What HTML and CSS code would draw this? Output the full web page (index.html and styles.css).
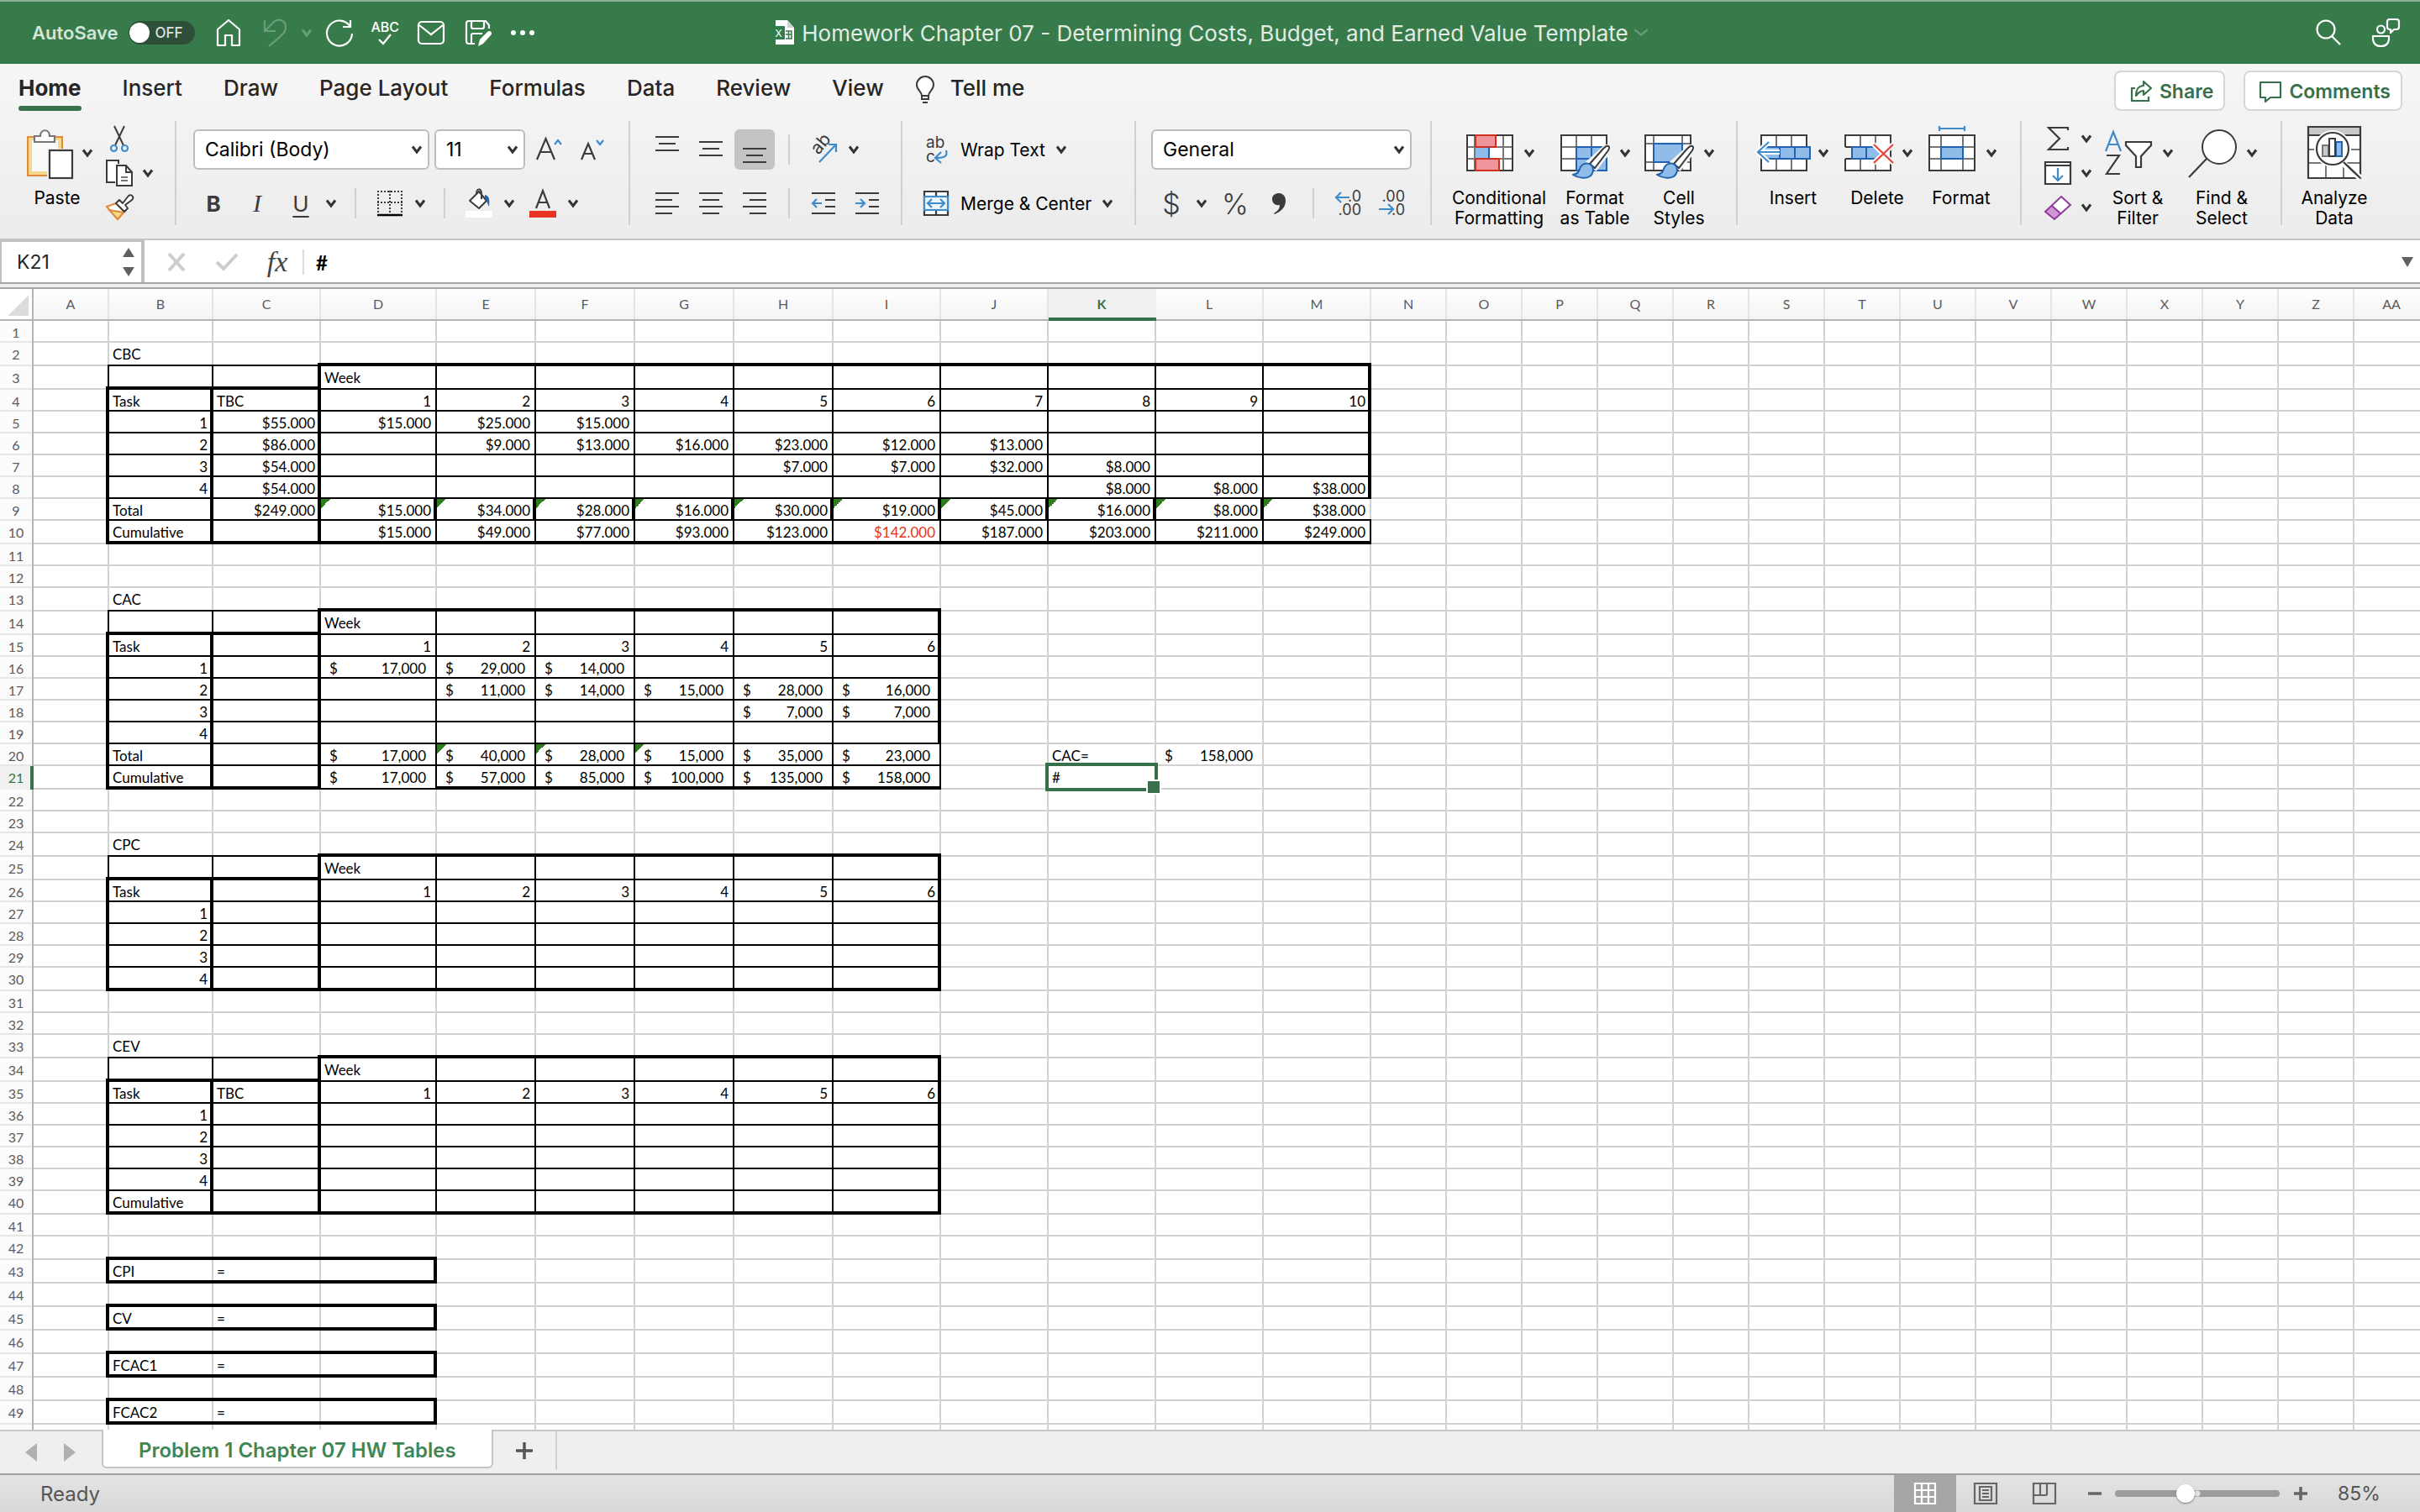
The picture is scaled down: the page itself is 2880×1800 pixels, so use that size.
FILE: index.html
```html
<!DOCTYPE html>
<html lang="en">
<head>
<meta charset="utf-8">
<title>Homework Chapter 07 - Determining Costs, Budget, and Earned Value Template</title>
<link rel="stylesheet" href="styles.css">
</head>
<body>
<svg class="defs" width="0" height="0" aria-hidden="true">
  <defs>
    <symbol id="chev" viewBox="0 0 14 14"><path d="M2 3.500 7 10l5-6.500" fill="none" stroke="currentColor" stroke-width="3"/></symbol>
    <symbol id="brush" viewBox="0 0 46 42"><path d="M42 2c3 0 3 2 2 4L28 27l-7-6z" fill="#fff" stroke="#f2f2f2" stroke-width="7"/><path d="M43 2c2 1 1 3 0 5L27 28l-6-5L37 5c2-2 4-4 6-3z" fill="#fff" stroke="#3b3b3b" stroke-width="2"/><path d="M1 36c6-1 7-4 8-7 2-6 8-8 13-5 4 3 4 10-1 14-5 3-14 2-20-2z" fill="#8fbce8" stroke="#2163b0" stroke-width="2"/></symbol>
  </defs>
</svg>

<header class="titlebar">
  <div class="quick">
    <label class="autosave" for="autosave">AutoSave</label>
    <span class="toggle"><input type="checkbox" id="autosave"><span class="toggle-text">OFF</span></span>
    <button class="qbtn home" aria-label="Home"><svg width="32" height="36" viewBox="0 0 32 36"><path d="M3 14 16 3l13 11v19h-9V21h-8v12H3z" fill="none" stroke="#fff" stroke-width="2.200" stroke-linejoin="round"/></svg></button>
    <button class="qbtn dim" aria-label="Undo"><svg width="32" height="36" viewBox="0 0 32 36"><path d="M3 3v13h13M3 16 14 5c6-5 14-1 14 6 0 5-2 7-6 11L8 34" fill="none" stroke="currentColor" stroke-width="2.200"/></svg></button>
    <button class="qchev dim" aria-label="Undo history"><svg width="14" height="14"><use href="#chev"/></svg></button>
    <button class="qbtn redo" aria-label="Repeat"><svg width="36" height="36" viewBox="0 0 36 36"><path d="M31 3v8h-9M31 11a15 15 0 1 0 2 8" fill="none" stroke="#fff" stroke-width="2.200"/></svg></button>
    <button class="qbtn abc" aria-label="Spelling"><span>ABC</span><svg width="18" height="14" viewBox="0 0 18 14"><path d="M2 7l5 5 9-11" fill="none" stroke="#fff" stroke-width="2.200"/></svg></button>
    <button class="qbtn" aria-label="Email"><svg width="36" height="32" viewBox="0 0 36 32"><rect x="3" y="3" width="30" height="26" rx="4" fill="none" stroke="#fff" stroke-width="2.200"/><path d="M4 7l14 11L32 7" fill="none" stroke="#fff" stroke-width="2.200"/></svg></button>
    <button class="qbtn" aria-label="Save"><svg width="36" height="36" viewBox="0 0 36 36"><path d="M14 31H7q-3 0-3-3V7q0-3 3-3h20l4 5v4M10 4v7q0 2 2 2h11q2 0 2-2V4M10 31V21q0-2 2-2h11" fill="none" stroke="#fff" stroke-width="2.200"/><path d="M18 34l2-8 9-9c3-3 7 1 4 4l-9 10z" fill="#fff"/></svg></button>
    <button class="qbtn" aria-label="More"><svg width="30" height="8" viewBox="0 0 30 8"><circle cx="4" cy="4" r="3" fill="#fff"/><circle cx="15" cy="4" r="3" fill="#fff"/><circle cx="26" cy="4" r="3" fill="#fff"/></svg></button>
  </div>
  <div class="doc">
    <svg width="30" height="32" viewBox="0 0 30 32"><path d="M5 1h14l8 9v20H5z" fill="#fff"/><path d="M19 1v9h8z" fill="#c9d6cd"/><path d="M17 14h7v9h-7M17 18h7M20.500 14v9" stroke="#37794a" stroke-width="1.500" fill="none"/><rect x="1" y="8" width="15" height="16" rx="1" fill="#2e7d4c"/><text x="8.500" y="20.500" font-size="12" fill="#fff" text-anchor="middle">X</text></svg>
    <h1>Homework Chapter 07 - Determining Costs, Budget, and Earned Value Template</h1>
    <svg class="dim" width="18" height="18" viewBox="0 0 14 14"><path d="M1 4l6 5 6-5" fill="none" stroke="currentColor" stroke-width="1.600"/></svg>
  </div>
  <div class="title-right">
    <button class="qbtn" aria-label="Search"><svg width="34" height="34" viewBox="0 0 34 34"><circle cx="14" cy="13" r="10.500" fill="none" stroke="#fff" stroke-width="2.200"/><path d="M21 21l10 10" stroke="#fff" stroke-width="2.200"/></svg></button>
    <button class="qbtn" aria-label="Collaborate"><svg width="38" height="36" viewBox="0 0 38 36"><path d="M22 2h10q3 0 3 3v6q0 3-3 3h-3l-4 4v-4h-1q-3 0-3-3V5q0-3 3-3M4 22h19v4q-1 8-9.500 8T4 26z" fill="none" stroke="#fff" stroke-width="2.200" stroke-linejoin="round"/><circle cx="13.500" cy="14" r="4.500" fill="none" stroke="#fff" stroke-width="2.200"/></svg></button>
  </div>
</header>

<section class="ribbon">
  <div class="tabrow">
    <nav class="tabs">
      <a href="#" class="tab active">Home</a>
      <a href="#" class="tab">Insert</a>
      <a href="#" class="tab">Draw</a>
      <a href="#" class="tab">Page Layout</a>
      <a href="#" class="tab">Formulas</a>
      <a href="#" class="tab">Data</a>
      <a href="#" class="tab">Review</a>
      <a href="#" class="tab">View</a>
      <a href="#" class="tab tell"><svg width="24" height="34" viewBox="0 0 24 34"><path d="M8 24c0-5-6-7-6-13a10 10 0 0 1 20 0c0 6-6 8-6 13z" fill="#fff" stroke="#3b3b3b" stroke-width="2"/><path d="M8 28h8M9 32h6M8 24v4h8v-4" stroke="#3b3b3b" stroke-width="2" fill="none"/></svg>Tell me</a>
    </nav>
    <div class="share-area">
      <button class="pill"><svg width="28" height="28" viewBox="0 0 28 28"><path d="M7 10H3v15h20v-5" fill="none" stroke="#37704a" stroke-width="2.200"/><path d="M17 2v5C11 7 8 12 8 19c3-4 5-6 9-6v5l9-8z" fill="none" stroke="#37704a" stroke-width="2.200" stroke-linejoin="round"/></svg>Share</button>
      <button class="pill"><svg width="28" height="28" viewBox="0 0 28 28"><path d="M2 3h24v18H14l-6 5v-5H2z" fill="none" stroke="#37704a" stroke-width="2.200" stroke-linejoin="round"/></svg>Comments</button>
    </div>
  </div>

  <div class="groups">
    <div class="group clipboard">
      <button class="big"><span class="big-top"><svg width="64" height="64" viewBox="0 0 64 64"><rect x="8" y="13" width="41" height="46" fill="#f5d88b" stroke="#e08a3c" stroke-width="2"/><rect x="13" y="17" width="31" height="37" fill="#fafafa"/><path d="M16 12h7c0-9 11-9 11 0h6v7H16z" fill="#fff" stroke="#777" stroke-width="2.200"/><rect x="31" y="27" width="33" height="37" fill="#f2f2f2"/><rect x="34" y="29" width="27" height="33" fill="#fff" stroke="#3b3b3b" stroke-width="2.200"/></svg><svg class="chev" width="14" height="14"><use href="#chev"/></svg></span><span class="cap">Paste</span></button>
      <div class="stack">
        <button class="mini" aria-label="Cut"><svg width="34" height="34" viewBox="0 0 34 34"><path d="M11 2l11 23M23 2 12 25" stroke="#3b3b3b" stroke-width="2" fill="none"/><circle cx="10.500" cy="28.500" r="3.500" fill="none" stroke="#3f8ccc" stroke-width="2.200"/><circle cx="23.500" cy="28.500" r="3.500" fill="none" stroke="#3f8ccc" stroke-width="2.200"/></svg></button>
        <button class="mini" aria-label="Copy"><svg width="34" height="34" viewBox="0 0 34 34"><path d="M12 28H2V2h14v4" fill="#fff" stroke="#3b3b3b" stroke-width="2"/><path d="M14 8h11l7 8v16H14z" fill="#fff" stroke="#3b3b3b" stroke-width="2"/><path d="M25 8v8h7" fill="none" stroke="#3b3b3b" stroke-width="2"/><path d="M19 22h8M19 26h8" stroke="#777" stroke-width="2"/></svg><svg class="chev" width="14" height="14"><use href="#chev"/></svg></button>
        <button class="mini" aria-label="Format painter"><svg width="34" height="34" viewBox="0 0 34 34"><path d="M2 16l11-4 10 10-8 9z" fill="#fff" stroke="#e08a3c" stroke-width="2"/><path d="M5 20l17 3-7 8z" fill="#f5d88b" stroke="#e08a3c" stroke-width="2"/><path d="M13 12l4-4 4 4 7-9q3-2 5 1 1 2-1 4l-8 6 3 4-4 4z" fill="#fff" stroke="#3b3b3b" stroke-width="2" stroke-linejoin="round"/></svg></button>
      </div>
    </div>

    <div class="group rows font">
      <div class="row fields">
        <span class="field face"><select aria-label="Font"><option>Calibri (Body)</option></select><svg width="14" height="14"><use href="#chev"/></svg></span>
        <span class="field size"><select aria-label="Font size"><option>11</option></select><svg width="14" height="14"><use href="#chev"/></svg></span>
        <button class="tb" aria-label="Grow font"><svg width="36" height="34" viewBox="0 0 36 34"><path d="M4 29 14.500 4 25 29M8 20h13" fill="none" stroke="#3b3b3b" stroke-width="2.200"/><path d="M25 11l4-5 4 5" fill="none" stroke="#3f8ccc" stroke-width="2.200"/></svg></button>
        <button class="tb" aria-label="Shrink font"><svg width="36" height="34" viewBox="0 0 36 34"><path d="M7 29 15 10l8 19M10 22h10" fill="none" stroke="#3b3b3b" stroke-width="2.200"/><path d="M25 6l4 5 4-5" fill="none" stroke="#3f8ccc" stroke-width="2.200"/></svg></button>
      </div>
      <div class="row">
        <button class="tb glyph bold">B</button><button class="tb glyph ital">I</button><button class="tb glyph under">U</button><button class="drop" aria-label="Underline styles"><svg width="14" height="14"><use href="#chev"/></svg></button>
        <i class="sep"></i>
        <button class="tb" aria-label="Borders"><svg width="32" height="32" viewBox="0 0 32 32"><path d="M1 2h30M1 15h30" stroke="#3b3b3b" stroke-width="2" stroke-dasharray="2 2"/><path d="M2 1v27M16 1v27M30 1v27" stroke="#3b3b3b" stroke-width="2" stroke-dasharray="2 2"/><path d="M1 30h30" stroke="#000" stroke-width="2.500"/></svg></button><button class="drop" aria-label="Border styles"><svg width="14" height="14"><use href="#chev"/></svg></button>
        <i class="sep"></i>
        <button class="tb" aria-label="Fill colour"><svg width="34" height="36" viewBox="0 0 34 36"><path d="M6 15 17 4l9 11-9 9z" fill="#fff" stroke="#3b3b3b" stroke-width="2" stroke-linejoin="round"/><path d="M14 7c0-7 6-8 6 0v6" fill="none" stroke="#3b3b3b" stroke-width="2"/><path d="M24 8c5 1 6 5 5 14-2-3-2-7-5-10z" fill="#2163b0"/><rect x="1" y="27" width="32" height="8" fill="#fff"/></svg></button><button class="drop" aria-label="Fill colours"><svg width="14" height="14"><use href="#chev"/></svg></button>
        <button class="tb fontcolor" aria-label="Font colour"><svg width="34" height="36" viewBox="0 0 34 36"><path d="M9 24 17 3l8 21M11 17h12" fill="none" stroke="#3b3b3b" stroke-width="2.200"/><rect x="1" y="27" width="32" height="8" fill="#e93323"/></svg></button><button class="drop" aria-label="Font colours"><svg width="14" height="14"><use href="#chev"/></svg></button>
      </div>
    </div>

    <div class="group rows align">
      <div class="row">
        <button class="tb" aria-label="Top align"><svg width="28" height="34" viewBox="0 0 28 34"><path d="M0 2h28M4 10h20M0 18h28" stroke="#3b3b3b" stroke-width="2.200"/></svg></button>
        <button class="tb" aria-label="Middle align"><svg width="28" height="34" viewBox="0 0 28 34"><path d="M0 8h28M4 16h20M0 24h28" stroke="#3b3b3b" stroke-width="2.200"/></svg></button>
        <button class="tb pressed" aria-label="Bottom align"><svg width="28" height="34" viewBox="0 0 28 34"><path d="M0 16h28M4 24h20M0 32h28" stroke="#3b3b3b" stroke-width="2.200"/></svg></button>
        <i class="sep"></i>
        <button class="tb" aria-label="Orientation"><svg width="34" height="32" viewBox="0 0 34 32"><text x="0" y="0" font-size="21" fill="#3b3b3b" transform="translate(11 23) rotate(-50)">ab</text><path d="M12 31 32 10M23 10h9v9" fill="none" stroke="#3f8ccc" stroke-width="2.200"/></svg></button><button class="drop" aria-label="Orientations"><svg width="14" height="14"><use href="#chev"/></svg></button>
      </div>
      <div class="row">
        <button class="tb" aria-label="Align left"><svg width="28" height="28" viewBox="0 0 28 28"><path d="M0 2h28M0 10h20M0 18h28M0 26h20" stroke="#3b3b3b" stroke-width="2.200"/></svg></button>
        <button class="tb" aria-label="Centre"><svg width="28" height="28" viewBox="0 0 28 28"><path d="M0 2h28M4 10h20M0 18h28M4 26h20" stroke="#3b3b3b" stroke-width="2.200"/></svg></button>
        <button class="tb" aria-label="Align right"><svg width="28" height="28" viewBox="0 0 28 28"><path d="M0 2h28M8 10h20M0 18h28M8 26h20" stroke="#3b3b3b" stroke-width="2.200"/></svg></button>
        <i class="sep"></i>
        <button class="tb" aria-label="Decrease indent"><svg width="28" height="28" viewBox="0 0 28 28"><path d="M0 2h28M16 10h12M16 18h12M0 26h28" stroke="#3b3b3b" stroke-width="2.200"/><path d="M12 14H1M6 9l-5 5 5 5" fill="none" stroke="#3f8ccc" stroke-width="2.200"/></svg></button>
        <button class="tb" aria-label="Increase indent"><svg width="28" height="28" viewBox="0 0 28 28"><path d="M0 2h28M16 10h12M16 18h12M0 26h28" stroke="#3b3b3b" stroke-width="2.200"/><path d="M0 14h11M6 9l5 5-5 5" fill="none" stroke="#3f8ccc" stroke-width="2.200"/></svg></button>
      </div>
    </div>

    <div class="group rows wrap">
      <div class="row"><button class="wide"><span class="tb"><svg width="28" height="34" viewBox="0 0 28 34"><text x="2" y="15" font-size="19" fill="#3b3b3b">ab</text><text x="2" y="32" font-size="19" fill="#3b3b3b">c</text><path d="M26 18c2 7-2 9-12 9M20 20l-7 7 7 6" fill="none" stroke="#3f8ccc" stroke-width="2.200"/></svg></span>Wrap Text<svg class="chev" width="14" height="14"><use href="#chev"/></svg></button></div>
      <div class="row"><button class="wide"><span class="tb"><svg width="32" height="32" viewBox="0 0 32 32"><path d="M2 2h28v28H2zM16 2v28" fill="#fff" stroke="#3b3b3b" stroke-width="2.200"/><rect x="2" y="8" width="28" height="16" fill="#eef5fc" stroke="#3f8ccc" stroke-width="2.200"/><path d="M6 16h20M11 11l-5 5 5 5M21 11l5 5-5 5" fill="none" stroke="#3f8ccc" stroke-width="2.200"/></svg></span>Merge &amp; Center<svg class="chev" width="14" height="14"><use href="#chev"/></svg></button></div>
    </div>

    <div class="group rows number">
      <div class="row fields"><span class="field format"><select aria-label="Number format"><option>General</option></select><svg width="14" height="14"><use href="#chev"/></svg></span></div>
      <div class="row">
        <button class="tb glyph thin">$</button><button class="drop" aria-label="Currencies"><svg width="14" height="14"><use href="#chev"/></svg></button>
        <button class="tb glyph thin">%</button><button class="tb" aria-label="Comma style"><svg width="20" height="28" viewBox="0 0 20 28"><path d="M4 26c5-3 7-6 7-10-5 1-9-2-9-7s4-7 8-7c5 0 8 4 8 9 0 8-6 13-13 16z" fill="#3b3b3b"/></svg></button>
        <i class="sep"></i>
        <button class="tb" aria-label="Increase decimals"><svg width="34" height="34" viewBox="0 0 34 34"><text x="33" y="15" font-size="18" fill="#3b3b3b" text-anchor="end">.0</text><text x="33" y="31" font-size="18" fill="#3b3b3b" text-anchor="end">.00</text><path d="M19 10H3M9 4l-6 6 6 6" fill="none" stroke="#3f8ccc" stroke-width="2.200"/></svg></button>
        <button class="tb" aria-label="Decrease decimals"><svg width="34" height="34" viewBox="0 0 34 34"><text x="33" y="15" font-size="18" fill="#3b3b3b" text-anchor="end">.00</text><text x="33" y="31" font-size="18" fill="#3b3b3b" text-anchor="end">.0</text><path d="M2 24h17M13 18l6 6-6 6" fill="none" stroke="#3f8ccc" stroke-width="2.200"/></svg></button>
      </div>
    </div>

    <div class="group styles">
      <button class="big broad"><span class="big-top"><svg width="64" height="64" viewBox="0 0 64 64"><rect x="5" y="11" width="54" height="42" fill="#fff"/><path d="M14 11v42M48 11v42M5 25h54M5 39h54" stroke="#777" stroke-width="2"/><rect x="5" y="11" width="54" height="42" fill="none" stroke="#3b3b3b" stroke-width="2"/><path d="M15 11h24v14H15zM15 39h28v14H15z" fill="#f0959b" stroke="#d0311f" stroke-width="2"/><path d="M15 26h16v12H15z" fill="#8fbce8"/><path d="M31 25v14" stroke="#2163b0" stroke-width="2"/></svg><svg class="chev" width="14" height="14"><use href="#chev"/></svg></span><span class="cap">Conditional<br>Formatting</span></button>
      <button class="big"><span class="big-top"><svg width="64" height="64" viewBox="0 0 64 64"><rect x="3" y="11" width="54" height="42" fill="#fff"/><path d="M21 11v42M39 11v42M3 25h54M3 39h54" stroke="#777" stroke-width="2"/><rect x="3" y="11" width="54" height="42" fill="none" stroke="#3b3b3b" stroke-width="2"/><path d="M21 25h36v28H21zM39 25v28M21 39h36" fill="#8fbce8" stroke="#2163b0" stroke-width="2"/><use href="#brush" x="16" y="22" width="46" height="42"/></svg><svg class="chev" width="14" height="14"><use href="#chev"/></svg></span><span class="cap">Format<br>as Table</span></button>
      <button class="big"><span class="big-top"><svg width="64" height="64" viewBox="0 0 64 64"><rect x="3" y="11" width="54" height="42" fill="#fff"/><path d="M13 11v42M47 11v42M3 21h54M3 43h54" stroke="#777" stroke-width="2"/><rect x="3" y="11" width="54" height="42" fill="none" stroke="#3b3b3b" stroke-width="2"/><rect x="13" y="21" width="34" height="22" fill="#8fbce8" stroke="#2163b0" stroke-width="2"/><use href="#brush" x="16" y="22" width="46" height="42"/></svg><svg class="chev" width="14" height="14"><use href="#chev"/></svg></span><span class="cap">Cell<br>Styles</span></button>
    </div>

    <div class="group cells">
      <button class="big"><span class="big-top"><svg width="64" height="64" viewBox="0 0 64 64"><rect x="5" y="11" width="54" height="42" fill="#fff"/><path d="M23 11v42M41 11v42" stroke="#777" stroke-width="2"/><rect x="5" y="11" width="54" height="42" fill="none" stroke="#3b3b3b" stroke-width="2"/><path d="M8 25h55v14H8zM27 25v14M45 25v14" fill="#8fbce8" stroke="#2163b0" stroke-width="2"/><path d="M27 31H3M14 19 1 31l13 12" fill="none" stroke="#fff" stroke-width="6"/><path d="M27 31H2M14 19 1 31l13 12" fill="none" stroke="#3f8ccc" stroke-width="2.200"/></svg><svg class="chev" width="14" height="14"><use href="#chev"/></svg></span><span class="cap">Insert</span></button>
      <button class="big"><span class="big-top"><svg width="64" height="64" viewBox="0 0 64 64"><path d="M5 11h54v42H5V39h8V25H5z" fill="#fff"/><path d="M23 11v42M41 11v42" stroke="#777" stroke-width="2"/><path d="M5 25V11h54v42H5V39M5 25h8M5 39h8" fill="none" stroke="#3b3b3b" stroke-width="2"/><path d="M13 25h28l8 7-8 7H13zM30 25v14" fill="#8fbce8" stroke="#2163b0" stroke-width="2"/><path d="M39 22l23 22M62 22 39 44" stroke="#fff" stroke-width="6"/><path d="M39 22l23 22M62 22 39 44" stroke="#e5483f" stroke-width="2.400"/></svg><svg class="chev" width="14" height="14"><use href="#chev"/></svg></span><span class="cap">Delete</span></button>
      <button class="big"><span class="big-top"><svg width="64" height="64" viewBox="0 0 64 64"><rect x="5" y="11" width="54" height="42" fill="#fff"/><path d="M19 11v42M45 11v42M5 25h54M5 39h54" stroke="#777" stroke-width="2"/><rect x="5" y="11" width="54" height="42" fill="none" stroke="#3b3b3b" stroke-width="2"/><rect x="19" y="25" width="26" height="14" fill="#8fbce8" stroke="#2163b0" stroke-width="2"/><path d="M17 0v6M47 0v6M17 3h30" stroke="#3f8ccc" stroke-width="2.200"/></svg><svg class="chev" width="14" height="14"><use href="#chev"/></svg></span><span class="cap">Format</span></button>
    </div>

    <div class="group editing">
      <div class="stack">
        <button class="mini" aria-label="AutoSum"><svg width="34" height="34" viewBox="0 0 34 34"><path d="M29 7V4H6l13 13L6 30h23v-3" fill="none" stroke="#3b3b3b" stroke-width="2.200"/></svg><svg class="chev" width="14" height="14"><use href="#chev"/></svg></button>
        <button class="mini" aria-label="Fill"><svg width="34" height="34" viewBox="0 0 34 34"><path d="M2 4h30v26H2zM2 8h30" fill="#fff" stroke="#3b3b3b" stroke-width="2.200"/><path d="M17 11v15M11 20l6 6 6-6" fill="none" stroke="#3f8ccc" stroke-width="2.200"/></svg><svg class="chev" width="14" height="14"><use href="#chev"/></svg></button>
        <button class="mini" aria-label="Clear"><svg width="34" height="34" viewBox="0 0 34 34"><path d="M21 4l11 10-19 17L2 22z" fill="#fff"/><path d="M10 15l10 9-7 7L2 22z" fill="#cf95d6"/><path d="M21 4l11 10-19 17L2 22zM10 15l10 9" fill="none" stroke="#8f3c9c" stroke-width="2"/></svg><svg class="chev" width="14" height="14"><use href="#chev"/></svg></button>
      </div>
      <button class="big"><span class="big-top"><svg width="64" height="64" viewBox="0 0 64 64"><path d="M5 30 14 7l9 23M8 22h12" fill="none" stroke="#3f8ccc" stroke-width="2.200"/><path d="M6 35h15L6 57h16" fill="none" stroke="#3b3b3b" stroke-width="2.200"/><path d="M29 19h30v4L47 36v13h-6V36L29 23z" fill="#fff" stroke="#3b3b3b" stroke-width="2.200"/></svg><svg class="chev" width="14" height="14"><use href="#chev"/></svg></span><span class="cap">Sort &amp;<br>Filter</span></button>
      <button class="big"><span class="big-top"><svg width="64" height="64" viewBox="0 0 64 64"><circle cx="40" cy="25" r="20" fill="#fff" stroke="#3b3b3b" stroke-width="2"/><path d="M25 39 4 61" stroke="#3b3b3b" stroke-width="2.200"/></svg><svg class="chev" width="14" height="14"><use href="#chev"/></svg></span><span class="cap">Find &amp;<br>Select</span></button>
    </div>

    <div class="group analyze">
      <button class="big"><span class="big-top"><svg width="64" height="64" viewBox="0 0 64 64"><path d="M1 1h62v61H1z" fill="#fff"/><path d="M1 1h62v10H1z" fill="#c9c9c9"/><path d="M1 28h62M1 44h62M22 44v18M43 44v18" stroke="#777" stroke-width="2"/><path d="M1 1h62v61H1zM1 11h62" fill="none" stroke="#3b3b3b" stroke-width="2.200"/><circle cx="30" cy="27" r="22" fill="#fff"/><path d="M41 43l22 19" stroke="#fff" stroke-width="7"/><circle cx="30" cy="27" r="19" fill="#fff" stroke="#3b3b3b" stroke-width="2.200"/><path d="M43 43l20 19" stroke="#3b3b3b" stroke-width="2.400"/><path d="M18 23h7v13h-7z" fill="#c9c9c9" stroke="#777" stroke-width="2"/><path d="M34 19h7v17h-7z" fill="#8fbce8" stroke="#2163b0" stroke-width="2"/><path d="M26 15h7v21h-7z" fill="#fff" stroke="#3b3b3b" stroke-width="2"/></svg></span><span class="cap">Analyze<br>Data</span></button>
    </div>
  </div>
</section>

<section class="formula">
  <div class="namebox"><input class="name" aria-label="Name box" value="K21"><svg width="14" height="34" viewBox="0 0 14 34"><path d="M0 11 7 0l7 11zM0 23l7 11 7-11z" fill="#606060"/></svg></div>
  <button class="fbtn" aria-label="Cancel"><svg width="22" height="22" viewBox="0 0 22 22"><path d="M2 1l18 20M20 1 2 21" stroke="#cdcdcd" stroke-width="4"/></svg></button>
  <button class="fbtn" aria-label="Enter"><svg width="28" height="22" viewBox="0 0 28 22"><path d="M2 11l8 8L26 2" fill="none" stroke="#cdcdcd" stroke-width="4"/></svg></button>
  <button class="fbtn fx" aria-label="Insert function"><em>fx</em></button>
  <input class="entry" aria-label="Formula" value="#">
  <button class="expand" aria-label="Expand formula bar"><svg width="14" height="12" viewBox="0 0 14 12"><path d="M0 0h14L7 12z" fill="#606060"/></svg></button>
</section>

<main class="sheet"><table class="grid" id="grid"></table></main>

<footer class="sheetbar">
  <button class="arrow" aria-label="Previous sheet"><svg width="14" height="22" viewBox="0 0 14 22"><path d="M14 0v22L0 11z" fill="#b0b0b0"/></svg></button>
  <button class="arrow" aria-label="Next sheet"><svg width="14" height="22" viewBox="0 0 14 22"><path d="M0 0v22l14-11z" fill="#b0b0b0"/></svg></button>
  <button class="sheet-tab">Problem 1 Chapter 07 HW Tables</button>
  <button class="add" aria-label="New sheet"><svg width="20" height="20" viewBox="0 0 20 20"><path d="M10 0v20M0 10h20" stroke="#555" stroke-width="3.500"/></svg></button>
</footer>

<footer class="status">
  <span class="ready">Ready</span>
  <button class="view on" aria-label="Normal view"><svg width="26" height="26" viewBox="0 0 26 26"><path d="M1 1h24v24H1zM1 9h24M1 17h24M9 1v24M17 1v24" fill="none" stroke="#fff" stroke-width="2.200"/></svg></button>
  <button class="view" aria-label="Page layout view"><svg width="28" height="26" viewBox="0 0 28 26"><path d="M1 1h26v24H1zM7 5h14v16H7zM10 9h8M10 13h8M10 17h8" fill="none" stroke="#666" stroke-width="2.200"/></svg></button>
  <button class="view" aria-label="Page break view"><svg width="28" height="26" viewBox="0 0 28 26"><path d="M1 1h26v24H1zM9 1v14M17 1v14M1 15h16" fill="none" stroke="#666" stroke-width="2.200"/></svg></button>
  <button class="zoom-step" aria-label="Zoom out"><svg width="16" height="16" viewBox="0 0 16 16"><path d="M0 8h16" stroke="#666" stroke-width="3.500"/></svg></button>
  <input class="zoom" type="range" min="0" max="100" value="42" aria-label="Zoom">
  <button class="zoom-step" aria-label="Zoom in"><svg width="16" height="16" viewBox="0 0 16 16"><path d="M0 8h16M8 0v16" stroke="#666" stroke-width="3.500"/></svg></button>
  <span class="percent">85%</span>
</footer>
<script src="sheet.js"></script>
</body>
</html>
```
FILE: styles.css
```css
* { box-sizing: border-box; }

body {
  margin: 0;
  height: 100vh;
  display: flex;
  flex-direction: column;
  overflow: hidden;
  font-family: Inter, "Liberation Sans", sans-serif;
  font-size: 22px;
  color: #000;
  background: #fff;
}

button, input, select { font: inherit; color: inherit; border: 0; background: none; padding: 0; margin: 0; }
svg { display: block; flex: none; overflow: visible; }
.defs { position: absolute; }

/* Title bar */
.titlebar {
  display: grid;
  grid-template-columns: 1fr auto 1fr;
  align-items: center;
  height: 76px;
  background: #387b4a;
  border-top: 2px solid #8bb196;
  color: #fff;
}
.quick { display: flex; align-items: center; padding-left: 38px; }
.autosave { font-size: 22px; font-weight: 600; color: #d3e4d8; margin-right: 12px; }
.toggle { display: grid; align-items: center; width: 79px; height: 28px; margin-right: 24px; border-radius: 14px; background: #2d4f39; }
.toggle > * { grid-area: 1 / 1; }
.toggle input { appearance: none; width: 24px; height: 24px; margin-left: 1px; border-radius: 12px; background: #fff; }
.toggle-text { padding-left: 32px; font-size: 17px; font-weight: 500; color: #d9e3dc; }
.qbtn { display: flex; align-items: center; justify-content: center; height: 36px; margin-right: 20px; }
.home { margin-right: 24px; }
.qchev { margin: 0 14px 0 -6px; }
.abc { flex-direction: column; font-size: 16px; line-height: 16px; font-weight: 500; }
.dim { color: #6a9d78; }
.doc { display: flex; align-items: center; gap: 6px; }
.doc h1 { margin: 0; font-size: 26px; font-weight: 400; color: #e1ece4; }
.title-right { display: flex; justify-content: flex-end; }
.title-right .qbtn { margin-right: 22px; }
.title-right .qbtn + .qbtn { margin: 0 22px 0 10px; }

/* Ribbon */
.ribbon { background: linear-gradient(#f6f6f6, #ececec); border-bottom: 2px solid #c4c4c4; padding-bottom: 16px; }
.tabrow { display: flex; justify-content: space-between; height: 68px; }
.tabs { display: flex; gap: 49px; padding: 14px 0 0 22px; }
.tab { display: flex; flex-direction: column; gap: 6px; height: 42px; line-height: 30px; font-size: 26px; font-weight: 500; color: #262626; text-decoration: none; }
.tab.active { font-weight: 700; }
.tab.active::after { content: ""; height: 6px; border-radius: 3px; background: #37704a; }
.tell { flex-direction: row; gap: 18px; margin-left: -12px; }
.share-area { display: flex; gap: 22px; padding: 8px 21px 0 0; }
.pill { display: flex; align-items: center; gap: 8px; height: 48px; padding: 2px 12px 0 16px; border: 2px solid #d6d6d6; border-radius: 8px; background: #fff; color: #37704a; font-size: 23px; font-weight: 600; }

.groups { display: flex; height: 124px; color: #000; }
.group { display: flex; border-right: 2px solid #d0d0d0; flex: none; }
.group:last-child { border-right: 0; }
.rows { flex-direction: column; gap: 16px; padding-top: 10px; }
.row { display: flex; align-items: center; height: 48px; }
.clipboard { width: 210px; padding-left: 18px; }
.font { width: 540px; padding-left: 18px; }
.align { width: 324px; padding-left: 18px; }
.wrap { width: 278px; padding-left: 14px; }
.number { width: 352px; padding-left: 16px; }
.styles { width: 364px; padding-left: 20px; }
.cells { width: 338px; padding-left: 16px; }
.editing { width: 310px; padding-left: 26px; }
.analyze { padding-left: 12px; }

.big { display: flex; flex-direction: column; align-items: center; gap: 10px; width: 100px; padding-top: 6px; }
.broad { width: 120px; margin-right: 4px; }
.big-top { display: flex; align-items: center; gap: 8px; height: 64px; }
.cap { font-size: 21px; line-height: 24px; white-space: nowrap; }
.chev, .drop, .field svg { color: #333; }
.stack { display: flex; flex-direction: column; }
.mini { display: flex; align-items: center; gap: 10px; width: 68px; height: 44px; padding-left: 7px; }
.editing .mini { width: 62px; padding-left: 0; }

.fields { gap: 6px; padding-left: 2px; }
.field { display: grid; align-items: center; height: 48px; }
.field > * { grid-area: 1 / 1; }
.field select { appearance: none; width: 100%; height: 48px; padding: 0 12px; border: 2px solid #bdbdbd; border-radius: 6px; background: #fff; font-size: 23px; }
.field svg { justify-self: end; margin-right: 8px; }
.face { width: 281px; }
.size { width: 108px; }
.format { width: 310px; }
.fields .tb { width: 44px; }

.tb { display: flex; align-items: center; justify-content: center; width: 52px; height: 48px; flex: none; }
.pressed { width: 48px; margin: 0 2px; border-radius: 6px; background: #c3c3c3; }
.drop { display: flex; justify-content: center; width: 20px; }
.fontcolor { margin-left: 4px; }
.sep { width: 2px; height: 36px; margin: 0 14px; background: #d0d0d0; }
.drop + .sep { margin-left: 18px; }
.glyph { font-size: 26px; color: #3b3b3b; }
.bold { font-weight: 700; }
.ital { font-family: "Liberation Serif", serif; font-style: italic; font-size: 30px; }
.under { text-decoration: underline; text-underline-offset: 5px; text-decoration-thickness: 2px; }
.thin { font-size: 34px; font-weight: 300; }
.number .drop + .tb { margin-left: 4px; }
.wide { display: flex; align-items: center; font-size: 21px; }
.wide .tb { margin-right: 3px; }
.wide .chev { margin-left: 12px; }

/* Formula bar */
.formula { display: flex; align-items: center; height: 58px; border-bottom: 2px solid #a6a6a6; padding-bottom: 4px; background: linear-gradient(#fff 50px, #a6a6a6 50px, #a6a6a6 52px, #efefef 52px); }
.namebox { display: flex; align-items: center; align-self: flex-start; width: 172px; height: 50px; padding: 0 8px 0 18px; border: solid #c0c0c0; border-width: 2px 4px 0 2px; }
.name { flex: 1; min-width: 0; font-size: 23px; color: #262626; }
.fbtn { display: flex; justify-content: center; width: 60px; }
.fbtn:first-of-type { margin-left: 8px; }
.fx { width: 62px; height: 30px; align-items: center; border-right: 2px solid #dcdcdc; margin-right: 14px; color: #444; }
.fx em { font-family: "Liberation Serif", serif; font-size: 34px; line-height: 30px; }
.entry { flex: 1; height: 44px; font-family: Lato, sans-serif; font-size: 24px; font-weight: 700; }
.expand { margin-right: 8px; }

/* Worksheet */
.sheet { flex: 1; min-height: 0; overflow: hidden; }
.grid {
  table-layout: fixed;
  width: 2892px;
  border-collapse: separate;
  border-spacing: 0;
  font-family: Lato, sans-serif;
  font-size: 17px;
  line-height: 24px;
}
.grid td, .grid th { padding: 0; vertical-align: top; white-space: nowrap; }
.grid td {
  --r: 0px;
  --b: 0px;
  position: relative;
  padding: 2px 7px 0 4px;
  height: 26px;
  box-shadow: inset calc(-1 * var(--r)) 0 #000, inset 0 calc(-1 * var(--b)) #000, inset -2px -2px #d2d2d2;
}
.tall td { height: 28px; }
.grid td.r2 { --r: 2px; }
.grid td.r4 { --r: 4px; }
.grid td.b2 { --b: 2px; }
.grid td.b4 { --b: 4px; }
.corner::before { content: ""; position: absolute; left: -4px; top: -4px; width: 4px; height: 4px; background: #000; }
.thin-corner::before { content: ""; position: absolute; left: -2px; top: -2px; width: 2px; height: 2px; background: #000; }
.flag { background: linear-gradient(135deg, #2f7d1f 50%, transparent 50%) 0 0 / 11px 11px no-repeat; }
.num { text-align: right; }
.red { color: #e93323; }
.grid td.money { padding: 2px 13px 0 10px; }
.money > span { display: flex; justify-content: space-between; }
.grid thead th { height: 38px; line-height: 36px; padding-right: 2px; font-size: 16px; font-weight: 400; color: #5c5c5c; background: linear-gradient(#fefefe, #f4f4f4); box-shadow: inset 0 -2px #b4b4b4, inset -2px 0 #e4e4e4; }
.grid thead .sel { color: #37704a; font-weight: 700; background: #f0f0f0; box-shadow: inset 0 -4px #37704a; }
.grid tbody th { padding: 2px 2px 0 0; font-size: 16px; font-weight: 400; color: #5c5c5c; background: #fcfcfc; box-shadow: inset -2px 0 #b4b4b4, inset 0 -2px #e6e6e6; }
.grid tbody .sel { color: #37704a; background: #f0f0f0; box-shadow: inset -4px 0 #37704a; }
.grid thead .all { background: linear-gradient(135deg, transparent 50%, #dcdcdc 50%) 10px 8px / 24px 24px no-repeat; box-shadow: inset 0 -2px #b4b4b4, inset -2px 0 #b4b4b4; }
.grid td.chosen { z-index: 1; }
.cursor { position: absolute; inset: -4px -2px -2px -4px; border: 4px solid #37704a; }
.cursor::after { content: ""; position: absolute; right: -8px; bottom: -8px; width: 14px; height: 14px; border: 2px solid #fff; background: #37704a; }

/* Sheet tabs */
.sheetbar { display: flex; height: 54px; border-top: 2px solid #c8c8c8; border-bottom: 2px solid #a0a0a0; padding-bottom: 4px; background: #efefef; }
.arrow { display: flex; align-items: center; justify-content: center; width: 46px; padding-top: 4px; }
.arrow:first-child { margin-left: 14px; }
.sheet-tab { height: 46px; margin: -2px 0 0 15px; padding: 4px 42px 0; border: 2px solid #c4c4c4; border-top: 0; border-radius: 0 0 6px 6px; background: #fff; color: #3f8656; font-size: 24px; font-weight: 600; }
.add { display: flex; align-items: center; justify-content: center; width: 76px; border-right: 2px solid #d0d0d0; }

/* Status bar */
.status { display: flex; align-items: center; height: 44px; background: linear-gradient(#e3e3e3, #d8d8d8); color: #555; }
.ready { margin: 0 auto 0 48px; font-size: 24px; }
.view { display: flex; align-items: center; justify-content: center; width: 70px; height: 44px; }
.view.on { width: 74px; background: #a6a6a6; }
.zoom-step { width: 16px; margin-left: 17px; }
.zoom { appearance: none; width: 196px; height: 8px; margin: 0 0 0 16px; border-radius: 4px; background: radial-gradient(circle at 98px 4px, #e0e0e0 3px, #9c9c9c 4px); }
.zoom::-webkit-slider-thumb { appearance: none; width: 22px; height: 22px; border-radius: 11px; background: #fff; box-shadow: 0 1px 2px #777; }
.percent { width: 64px; margin: 0 34px 0 36px; font-size: 23px; }
```
FILE: sheet.js
```js
// Column letters and widths; every column after M has the default width.
const letters = "A B C D E F G H I J K L M N O P Q R S T U V W X Y Z AA".split(" ");
const widths = [90, 124, 128, 138, 118, 118, 118, 118, 128, 128, 128, 128, 128];
const tallRows = [2, 3, 10, 13, 14, 21, 24, 25, 30, 33, 34, 40, 42, 43, 44, 45, 46, 47, 48, 49];
const rowCount = 50;

// Cell contents by row, starting at column B; an empty part leaves a cell empty.
const rows = {
  2: "CBC", 3: "||Week",
  4: "Task|TBC|1|2|3|4|5|6|7|8|9|10",
  5: "1|$55.000|$15.000|$25.000|$15.000",
  6: "2|$86.000||$9.000|$13.000|$16.000|$23.000|$12.000|$13.000",
  7: "3|$54.000|||||$7.000|$7.000|$32.000|$8.000",
  8: "4|$54.000||||||||$8.000|$8.000|$38.000",
  9: "Total|$249.000|$15.000|$34.000|$28.000|$16.000|$30.000|$19.000|$45.000|$16.000|$8.000|$38.000",
  10: "Cumulative||$15.000|$49.000|$77.000|$93.000|$123.000|$142.000|$187.000|$203.000|$211.000|$249.000",
  13: "CAC", 14: "||Week", 15: "Task||1|2|3|4|5|6",
  16: "1||$ 17,000|$ 29,000|$ 14,000",
  17: "2|||$ 11,000|$ 14,000|$ 15,000|$ 28,000|$ 16,000",
  18: "3||||||$ 7,000|$ 7,000", 19: "4",
  20: "Total||$ 17,000|$ 40,000|$ 28,000|$ 15,000|$ 35,000|$ 23,000||CAC=|$ 158,000",
  21: "Cumulative||$ 17,000|$ 57,000|$ 85,000|$ 100,000|$ 135,000|$ 158,000||#",
  24: "CPC", 25: "||Week", 26: "Task||1|2|3|4|5|6", 27: "1", 28: "2", 29: "3", 30: "4",
  33: "CEV", 34: "||Week", 35: "Task|TBC|1|2|3|4|5|6", 36: "1", 37: "2", 38: "3", 39: "4", 40: "Cumulative",
  43: "CPI|=", 45: "CV|=", 47: "FCAC1|=", 49: "FCAC2|="
};

const grid = document.getElementById("grid");
const cells = {};

const colgroup = document.createElement("colgroup");
colgroup.innerHTML = '<col style="width:40px">' + letters.map((l, i) => `<col style="width:${widths[i] || 90}px">`).join("");
grid.append(colgroup);

const head = grid.createTHead().insertRow();
head.innerHTML = '<th class="all"></th>' + letters.map(l => `<th scope="col"${l === "K" ? ' class="sel"' : ""}>${l}</th>`).join("");

const body = grid.createTBody();
for (let r = 1; r <= rowCount; r++) {
  const tr = body.insertRow();
  if (tallRows.includes(r)) tr.className = "tall";
  tr.innerHTML = `<th scope="row"${r === 21 ? ' class="sel"' : ""}>${r}</th>`;
  const values = (rows[r] || "").split("|");
  letters.forEach((letter, c) => {
    const td = tr.insertCell();
    const value = c ? values[c - 1] || "" : "";
    if (value.startsWith("$ ")) {
      td.className = "money";
      td.innerHTML = `<span><span>$</span><span>${value.slice(2)}</span></span>`;
    } else {
      if (/^[$\d]/.test(value)) td.className = "num";
      td.textContent = value;
    }
    cells[letter + r] = td;
  });
}

// Gives each cell of a range a black right (r) or bottom (b) line of 2 or 4 px.
function line(from, to, top, bottom, side, px) {
  for (let r = top; r <= bottom; r++) {
    for (let c = letters.indexOf(from); c <= letters.indexOf(to); c++) {
      const list = cells[letters[c] + r].classList;
      list.remove(side + 2, side + 4);
      list.add(side + px);
    }
  }
}

function block(top, bottom, last) {
  line("B", "C", top - 1, top - 1, "b", 2);
  line("D", last, top - 1, top - 1, "b", 4);
  line("A", "B", top, top, "r", 2);
  line("C", "C", top, bottom, "r", 4);
  line("A", "B", top + 1, bottom, "r", 4);
  line("D", last, top, bottom, "r", 2);
  line(last, last, top, bottom, "r", 4);
  line("B", last, top, bottom, "b", 2);
  line("B", "C", top, top, "b", 4);
  line("B", last, bottom, bottom, "b", 4);
  cells["B" + top].classList.add("thin-corner");
  cells["D" + top].classList.add("corner");
  cells["B" + (top + 1)].classList.add("corner");
}

block(3, 10, "M");
line("D", "L", 9, 9, "r", 4);
line("M", "M", 10, 10, "r", 2);
cells.M9.classList.remove("r4");
block(14, 21, "I");
line("I", "I", 20, 21, "r", 2);
line("D", "D", 21, 21, "b", 2);
block(25, 30, "I");
block(34, 40, "I");

for (const r of [43, 45, 47, 49]) {
  line("B", "D", r - 1, r, "b", 4);
  line("A", "A", r, r, "r", 4);
  line("D", "D", r, r, "r", 4);
  cells["B" + r].classList.add("corner");
}

for (const id of "D9 E9 F9 G9 H9 I9 J9 K9 L9 M9 E20 F20 G20".split(" ")) cells[id].classList.add("flag");
cells.I10.classList.add("red");
cells.K21.classList.add("chosen");
cells.K21.insertAdjacentHTML("beforeend", '<div class="cursor"></div>');
```
